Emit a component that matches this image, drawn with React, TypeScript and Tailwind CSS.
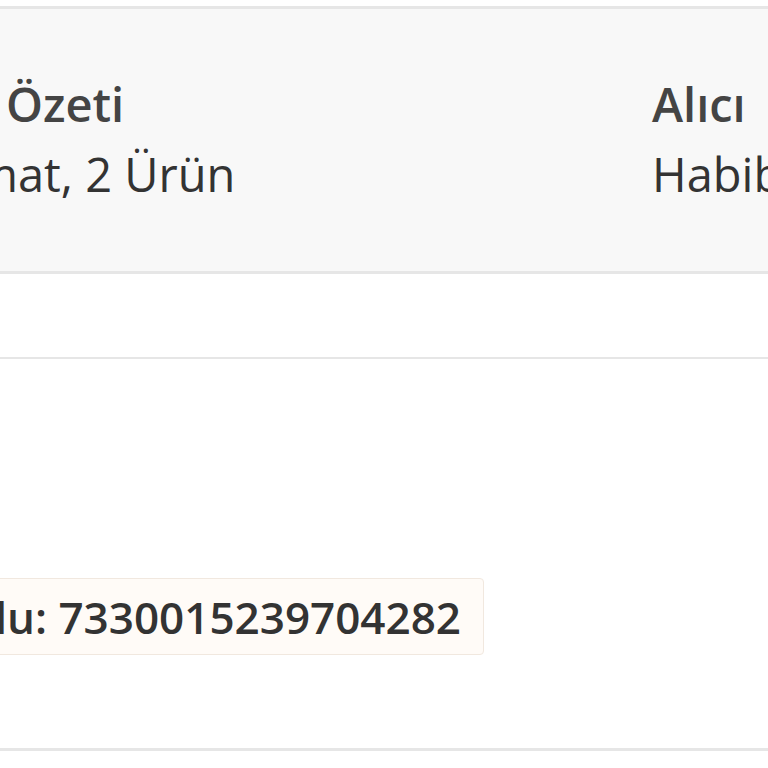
import React from "react";

const font = { fontFamily: "'Open Sans', 'Noto Sans', Arial, sans-serif" };

const App = () => {
    return (
        <div className="w-[768px] h-[768px] overflow-hidden bg-white text-[#333]" style={font}>
            {/* summary header */}
            <div className="mt-[6px] h-[268px] border-y-[3px] border-[#e6e6e6] bg-[#f8f8f8] pt-[60px] flex whitespace-nowrap">
                <div className="w-[652px] shrink-0 flex flex-col">
                    <span className="text-[47px] leading-[70px] font-semibold text-[#444] -ml-[158px]">Sipariş Özeti</span>
                    <span className="text-[47px] leading-[70px] -ml-[163px]">1 Teslimat, 2 Ürün</span>
                </div>
                <div className="flex flex-col">
                    <span className="text-[47px] leading-[70px] font-semibold text-[#444]">Alıcı</span>
                    <span className="text-[47px] leading-[70px]">Habib Yılmaz</span>
                </div>
            </div>

            <div className="h-[85px] border-b-[2px] border-[#e6e6e6]" />

            {/* order code */}
            <div className="h-[392px] border-b-[3px] border-[#e6e6e6] pt-[219px]">
                <div className="w-[484px] flex justify-end">
                    <div className="shrink-0 flex items-center h-[77px] pl-[20px] pr-[22px] border border-[#f1e8df] bg-[#fffbf7] rounded-[4px] whitespace-nowrap">
                        <span className="text-[44px] font-semibold text-[#333]">Sipariş Kodu: 7330015239704282</span>
                    </div>
                </div>
            </div>
        </div>
    );
};

export default App;
